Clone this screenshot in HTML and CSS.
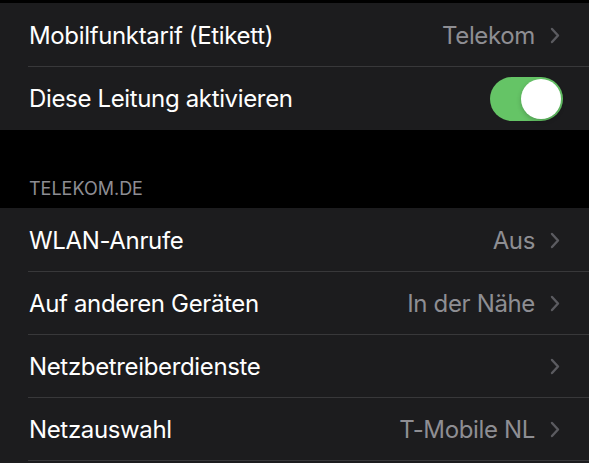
FILE: index.html
```html
<!DOCTYPE html>
<html lang="de">
<head>
  <meta charset="UTF-8" />
  <meta name="viewport" content="width=device-width, initial-scale=1.0" />
  <title>Mobilfunk</title>
  <link rel="stylesheet" href="styles.css">
</head>
<body>
  <div class="top-gap"></div>

  <div class="group">
    <div class="row">
      <div class="row-body">
        <span class="label">Mobilfunktarif (Etikett)</span>
        <span class="value">Telekom</span>
        <svg class="chevron" viewBox="0 0 10 17"><polyline points="2,2 8,8.5 2,15"/></svg>
      </div>
    </div>
    <div class="row">
      <div class="row-body">
        <span class="label">Diese Leitung aktivieren</span>
        <span class="toggle on"><span class="knob"></span></span>
      </div>
    </div>
  </div>

  <div class="section-header">TELEKOM.DE</div>

  <div class="group group-cut">
    <div class="row">
      <div class="row-body">
        <span class="label">WLAN-Anrufe</span>
        <span class="value">Aus</span>
        <svg class="chevron" viewBox="0 0 10 17"><polyline points="2,2 8,8.5 2,15"/></svg>
      </div>
    </div>
    <div class="row">
      <div class="row-body">
        <span class="label">Auf anderen Geräten</span>
        <span class="value">In der Nähe</span>
        <svg class="chevron" viewBox="0 0 10 17"><polyline points="2,2 8,8.5 2,15"/></svg>
      </div>
    </div>
    <div class="row">
      <div class="row-body">
        <span class="label">Netzbetreiberdienste</span>
        <svg class="chevron" viewBox="0 0 10 17"><polyline points="2,2 8,8.5 2,15"/></svg>
      </div>
    </div>
    <div class="row">
      <div class="row-body">
        <span class="label">Netzauswahl</span>
        <span class="value">T-Mobile NL</span>
        <svg class="chevron" viewBox="0 0 10 17"><polyline points="2,2 8,8.5 2,15"/></svg>
      </div>
    </div>
  </div>
</body>
</html>
```

FILE: styles.css
```css
body {
  margin: 0;
  background-color: #000;
  color: #fff;
  font-family: Inter, 'Noto Sans', sans-serif;
  overflow: hidden;
}
.top-gap {
  height: 3px;
}
.group {
  background-color: #1c1c1e;
  padding-top: 1px;
}
.group-cut {
  padding-bottom: 20px;
}
.row {
  padding-left: 28px;
}
.row-body {
  display: flex;
  align-items: center;
  height: 63px;
  box-sizing: border-box;
  padding-right: 29px;
  border-bottom: 1px solid #38383a;
}
.group .row:last-child .row-body {
  border-bottom: none;
}
.group-cut .row:last-child .row-body {
  border-bottom: 1px solid #38383a;
}
.label {
  flex: 1;
  padding-left: 1px;
  font-size: 24px;
  letter-spacing: -0.35px;
}
.value {
  font-size: 24px;
  letter-spacing: -0.35px;
  color: #8e8e93;
  margin-right: 15px;
}
.chevron {
  width: 10px;
  height: 17px;
  fill: none;
  stroke: #5b5b60;
  stroke-width: 2.4;
  stroke-linecap: round;
  stroke-linejoin: round;
}
.toggle {
  display: flex;
  align-items: center;
  justify-content: flex-end;
  width: 73px;
  height: 44px;
  box-sizing: border-box;
  padding: 2px;
  border-radius: 22px;
  background-color: #65c466;
  margin-right: -3px;
}
.knob {
  width: 40px;
  height: 40px;
  border-radius: 50%;
  background-color: #fff;
  box-shadow: 0 2px 5px rgba(0, 0, 0, 0.2);
}
.section-header {
  height: 78px;
  box-sizing: border-box;
  display: flex;
  align-items: flex-end;
  padding: 0 0 9px 29px;
  font-size: 18px;
  color: #8d8d93;
}
```
